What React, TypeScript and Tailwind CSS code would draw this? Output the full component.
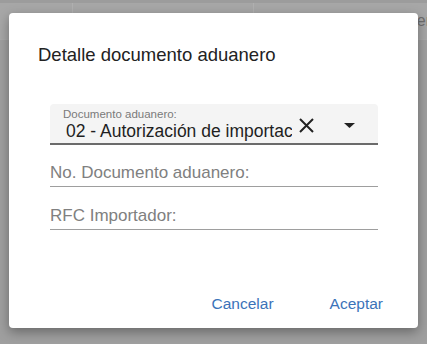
import React from "react";

function Field({ label }: { label: string }) {
  return (
    <div className="flex flex-col border-b border-[#9e9e9e] pb-[4px]">
      <span className="text-[17px] leading-[19px] text-[#808080]">{label}</span>
    </div>
  );
}

export default function App() {
  return (
    <div
      className="relative h-[344px] w-[427px] overflow-hidden bg-[#9f9f9f]"
      style={{ fontFamily: "'Liberation Sans', Arial, sans-serif" }}
    >
      {/* table behind the overlay */}
      <div className="flex h-[40px] border-t-[3px] border-b border-[#a9a9a9] border-t-[#9c9c9c] bg-[#a7a7a7]">
        <div className="w-[73px] border-r border-[#b0b0b0]" />
        <div className="w-[181px] border-r border-[#b0b0b0]" />
        <div className="flex flex-1 items-center justify-end text-[16px] text-[#6e6e6e]">
          <span className="-mr-[4px]">er</span>
        </div>
      </div>

      <div className="absolute left-[9px] top-[13px] flex h-[315px] w-[409px] flex-col rounded-[4px] bg-white shadow-[0_4px_12px_rgba(0,0,0,0.35)]">
        <h2 className="ml-[29px] mt-[31px] text-[18.5px] leading-[22px] text-[#222]">
          Detalle documento aduanero
        </h2>

        <div className="ml-[41px] mr-[40px] mt-[38px] flex flex-col">
          <div className="flex h-[41px] items-stretch rounded-t-[4px] border-b-2 border-[#6b6b6b] bg-[#f4f4f4]">
            <div className="flex min-w-0 flex-1 flex-col pl-[13px] pt-[4px]">
              <span className="text-[11.5px] leading-[13px] text-[#7a7a7a]">Documento aduanero:</span>
              <span className="overflow-hidden whitespace-nowrap pl-[3px] text-[17.5px] leading-[20px] text-[#1f1f1f]">
                02 - Autorización de importación temporal
              </span>
            </div>
            <div className="flex items-center pr-[23px] pt-[4px]">
              <svg width="15" height="15" viewBox="0 0 15 15" className="ml-[7px]">
                <path d="M1 1 14 14M14 1 1 14" stroke="#222" strokeWidth="2" />
              </svg>
              <svg width="11" height="5" viewBox="0 0 11 5" className="ml-[30px]">
                <path d="M0 0h11L5.5 5z" fill="#222" />
              </svg>
            </div>
          </div>

          <div className="mt-[18px] flex flex-col gap-[19px]">
            <Field label="No. Documento aduanero:" />
            <Field label="RFC Importador:" />
          </div>
        </div>

        <div className="mt-auto mb-[15px] mr-[35px] flex justify-end gap-[56px] text-[15.5px] leading-[18px] text-[#3b73b9]">
          <button>Cancelar</button>
          <button>Aceptar</button>
        </div>
      </div>
    </div>
  );
}
